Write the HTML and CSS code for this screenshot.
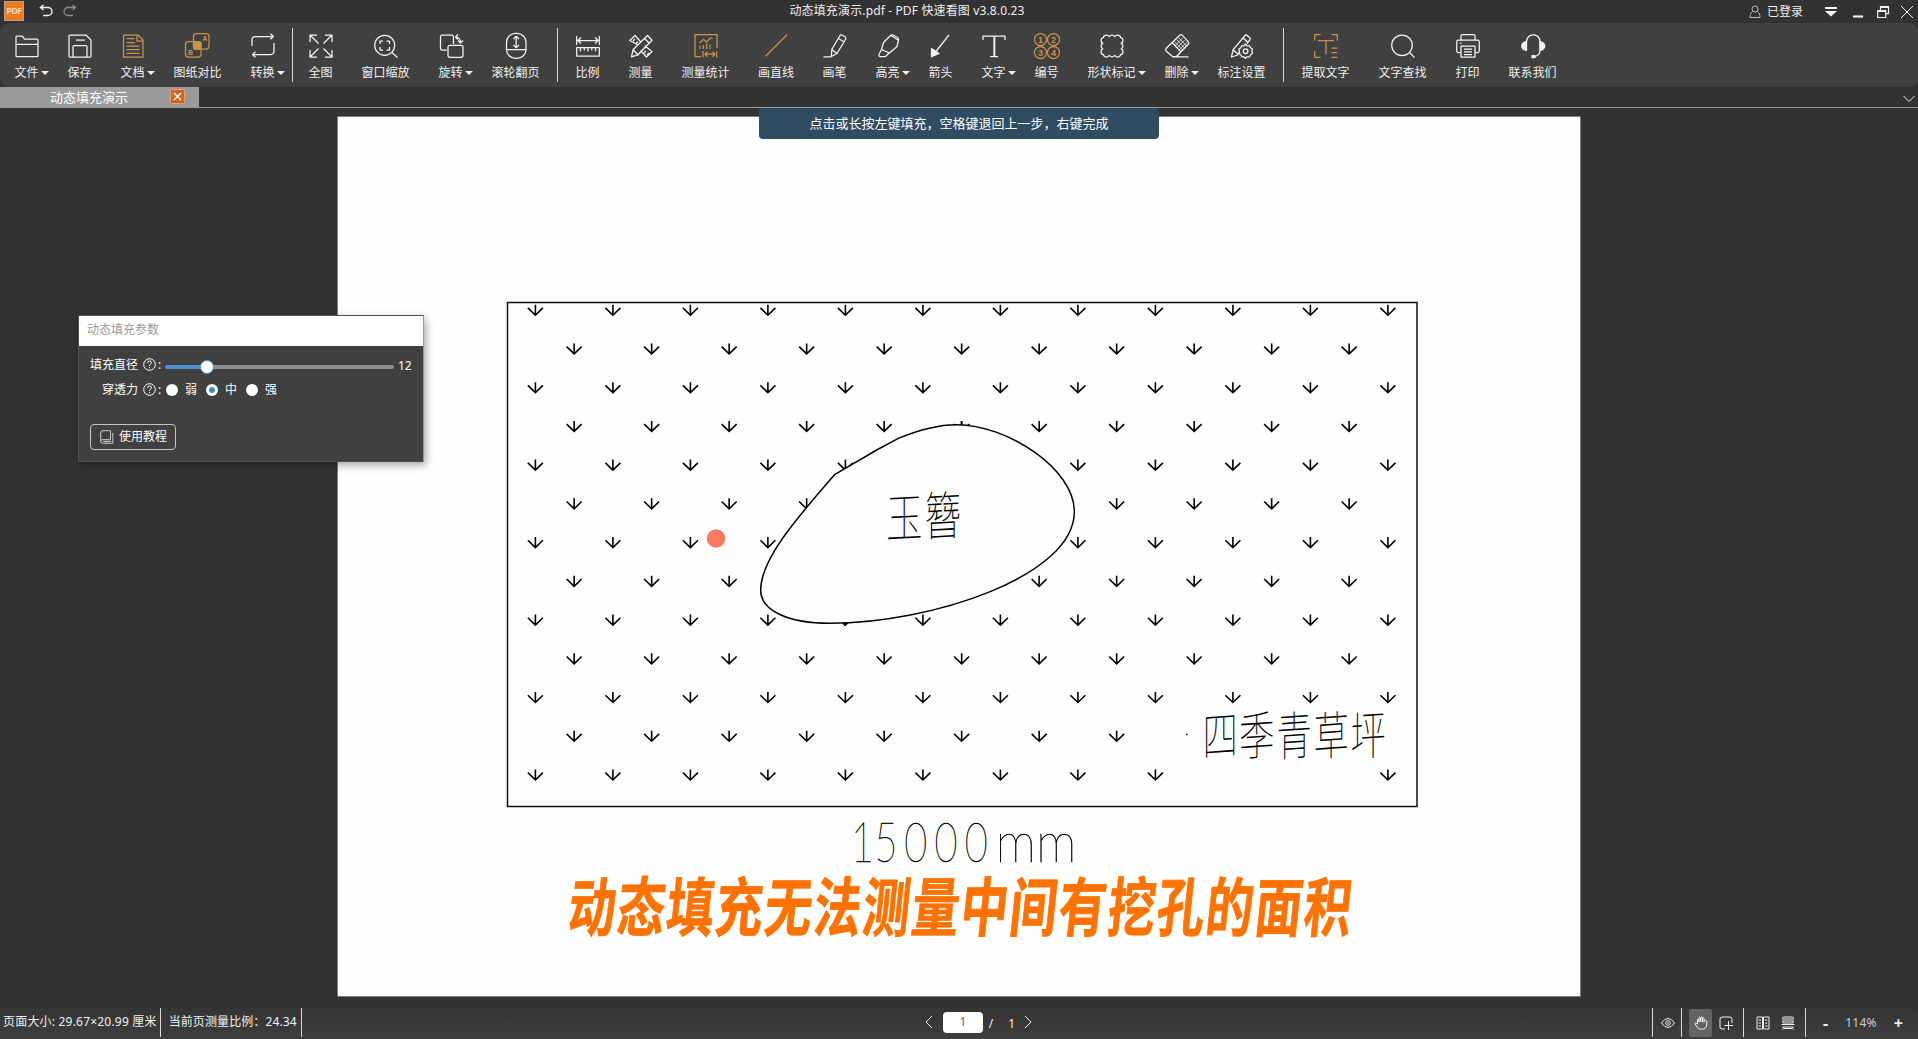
FILE: index.html
```html
<!DOCTYPE html>
<html lang="zh-CN">
  <head>
    <meta charset="UTF-8" />
    <meta name="viewport" content="width=device-width, initial-scale=1.0" />
    <title>动态填充演示.pdf - PDF 快速看图 v3.8.0.23</title>
    <link rel="stylesheet" href="styles.css">
  </head>
  <body>
    <header class="titlebar">
      <div class="title-left">
        <div class="logo">PDF</div>
        <svg class="undo" viewBox="0 0 14 14"><path d="M4.500 1 1.500 3.500l3 2.500M1.500 3.500H9a4 4 0 0 1 0 8H4"/></svg>
        <svg class="redo" viewBox="0 0 14 14"><path d="M9.500 1l3 2.500-3 2.500M12.500 3.500H5a4 4 0 0 0 0 8h5"/></svg>
      </div>
      <div class="title-text">动态填充演示.pdf - PDF 快速看图 v3.8.0.23</div>
      <div class="title-right">
        <svg class="user" viewBox="0 0 12 14"><circle cx="6" cy="4" r="3"/><path d="M3.500 6.500C1.500 8 1 10 1 12.500h10c0-2.500-.5-4.500-2.500-6"/></svg>
        <span class="login">已登录</span>
        <svg class="win-menu" viewBox="0 0 12 12"><path d="M0 1h12v2H0zM0 5h12l-6 5.500z"/></svg>
        <svg class="win-min" viewBox="0 0 10 12"><path d="M0 9.500h10v2H0z"/></svg>
        <svg class="win-restore" viewBox="0 0 12 12"><path d="M3.500 4V.7h8v7H9M.7 4.500h8v7h-8zM3.500 1.500h8M.7 5.300h8"/></svg>
        <svg class="win-close" viewBox="0 0 14 14"><path d="M1 1l12 12M13 1 1 13"/></svg>
      </div>
    </header>

    <nav class="toolbar">
      <div class="tool"><svg viewBox="0 0 24 24"><path d="M1 22V3q0-1 1-1h5l2.500 3H22q1 0 1 1v16q0 .6-.6.6H1.600Q1 22.600 1 22zM1 10.300h22"/></svg><span class="label drop">文件</span></div>
      <div class="tool"><svg viewBox="0 0 24 24"><path d="M2 1h16l5 5v16q0 1-1 1H2q-1 0-1-1V2q0-1 1-1zM5 23V12.500q0-1 1-1h12q1 0 1 1V23M8 6h9"/></svg><span class="label">保存</span></div>
      <div class="tool gold"><svg viewBox="0 0 24 24"><path d="M2.500 1H17l5 5v17H2.500zM16 1v6h6M5.500 4.500h8M5.500 8.500h8M5.500 12h13M5.500 15.700h13M5.500 19.300h13"/></svg><span class="label drop">文档</span></div>
      <div class="tool wide gold"><svg viewBox="0 0 24 24"><rect x="7.500" y="-.5" width="15.500" height="15.500" rx="3"/><rect x="-.5" y="7.500" width="15.500" height="15.500" rx="3"/><rect class="solid" x="7.500" y="7.500" width="7.500" height="7.500" rx="1.500"/><text x="16.300" y="7">A</text><text x="2" y="20.700">B</text></svg><span class="label">图纸对比</span></div>
      <div class="tool"><svg viewBox="0 0 24 24"><path d="M1 12V6q0-3.500 3.500-3.500H22M19.500-.2l3 2.700-3 2.700M23 9v8q0 3.500-3.500 3.500H2M4.500 17.800l-3 2.700 3 2.700"/></svg><span class="label drop">转换</span></div>
      <div class="divider first"></div>
      <div class="tool"><svg viewBox="0 0 24 24"><path d="M1 8V1h7M1 1l8.500 8.500M16 1h7v7M23 1l-8.500 8.500M1 16v7h7M1 23l8.500-8.500M16 23h7v-7M23 23l-8.500-8.500"/></svg><span class="label">全图</span></div>
      <div class="tool wide"><svg viewBox="0 0 24 24"><circle cx="10.700" cy="11.300" r="10"/><path d="M18 18.500l5.500 5M6 10V7h3M12.500 7h3v3M15.500 13v3h-3M9 16H6v-3"/></svg><span class="label">窗口缩放</span></div>
      <div class="tool"><svg viewBox="0 0 24 24"><path d="M8 16H3.500Q1.500 16 1.500 14V3q0-2 2-2h9q2 0 2 2v7"/><rect x="9" y="11.300" width="15" height="12" rx="2"/><path d="M17 3q4 .5 4.500 5M19 .5 16.500 3l2.500 2.500M19 6.500l2.500 2.500L24 6.500"/></svg><span class="label drop">旋转</span></div>
      <div class="tool wide"><svg viewBox="0 0 24 24"><rect x="2.500" y="-.6" width="19.500" height="25" rx="9"/><path d="M2.500 15.700H22M12.200 2.500v11M9.500 5l2.700-2.700L15 5M9.500 11l2.700 2.700L15 11"/></svg><span class="label">滚轮翻页</span></div>
      <div class="divider"></div>
      <div class="tool"><svg viewBox="0 0 24 24"><path d="M.7 2v9M23.300 2v9M2 6.500h20M5 3.500l-3 3 3 3M19 3.500l3 3-3 3M.7 13.500h22.600V22H.7zM4.500 13.500v4M8.300 13.500v3M12 13.500v4M15.800 13.500v3M19.500 13.500v4"/></svg><span class="label">比例</span></div>
      <div class="tool"><svg viewBox="0 0 24 24"><path d="M9 11 .8 6.500 6 1.500l5.500 6M15.500 11.500l7.500 6-5.500 5.500-6-6.500M4 7l2-2M7 9.500l2-2M15 19l2-2M18 21l2-2M2.500 22.800l1.500-7L18.500 1.500l4.500 4.800L9 20.800zM4 15.800l5 5M15.500 4.500l4.800 4.800"/></svg><span class="label">测量</span></div>
      <div class="tool wide gold"><svg viewBox="0 0 24 24"><path d="M7 22.700H1V.7h22V14M5.500 9l4-3.500 3 2.500 4-4h2M6 15v-3M9.300 15v-4M12.600 15V9.500M16 15v-4.500M9 17v6.500M22.700 17v6.500M11 20.200h10M13.500 17.700 11 20.200l2.500 2.500M18.500 17.700l2.500 2.500-2.500 2.500"/></svg><span class="label">测量统计</span></div>
      <div class="tool three gold"><svg viewBox="0 0 24 24"><path d="M1.500 22.300 23 .8"/></svg><span class="label">画直线</span></div>
      <div class="tool"><svg viewBox="0 0 24 24"><path d="M.5 22.800h7.700M8.300 22.500l.5-7L17 1.500q1-1 2.500-.3l2.500 1.500q1.200 1 .6 2.500L14 19.500zM8.800 15.500l5.200 4M15.500 4.500l5.700 3.500"/></svg><span class="label">画笔</span></div>
      <div class="tool"><svg viewBox="0 0 24 24"><path d="M5.500 15.500 7.500 8.500 14.500 1.500q1-1 2.500-.5l4.500 2.500q1.300.8 1 2.500l-1.500 6.500-7.500 6.500zM15 1.500l7 4.500M5.500 15.500 3 20.500q-.5 2 1.500 2h5l3.500-3.500"/></svg><span class="label drop">高亮</span></div>
      <div class="tool"><svg viewBox="0 0 24 24"><path d="M20 1 5 20"/><path class="solid" d="M2.500 14.500v8.300l7.500-3.300z"/></svg><span class="label">箭头</span></div>
      <div class="tool"><svg viewBox="0 0 24 24"><path d="M1 6V2.200h22V6M12 2.200V22.500M8 22.500h8"/><path d="M12.700 3v19"/></svg><span class="label drop">文字</span></div>
      <div class="tool gold"><svg viewBox="0 0 24 24"><circle cx="5.500" cy="5.500" r="6"/><circle cx="18.500" cy="5.500" r="6"/><circle cx="5.500" cy="18.500" r="6"/><circle cx="18.500" cy="18.500" r="6"/><text class="num" x="3" y="8.700">1</text><text class="num" x="16" y="8.700">2</text><text class="num" x="3" y="21.700">3</text><text class="num" x="16" y="21.700">4</text></svg><span class="label">编号</span></div>
      <div class="tool wide"><svg viewBox="0 0 24 24"><path d="M3.500 3.500q0-2.500 3-2.500 2 0 2.700 1.700Q12-.5 14.800 2.700 15.500 1 17.500 1q3 0 3 2.500 2.500 0 2.500 3 0 2-1.700 2.700 3.200 2.800 0 5.600Q23 15.500 23 17.500q0 3-2.500 3 0 2.500-3 2.500-2 0-2.700-1.700-2.800 3.200-5.600 0Q8.500 23 6.500 23q-3 0-3-2.500-2.500 0-2.500-3 0-2 1.700-2.700-3.200-2.800 0-5.600Q1 8.500 1 6.500q0-3 2.500-3z"/></svg><span class="label drop">形状标记</span></div>
      <div class="tool"><svg viewBox="0 0 24 24"><path d="M7.500 22.500 1 17q-1-1.500.3-2.800L15 1q1.500-.8 2.500.3l6 6.500q.8 1.500-.3 2.500L11.500 22.500zM7.500 9l8.500 9M7.500 22.800h16"/><path class="mesh" d="M9.500 7.500l8.500 9M11.500 5.500l8.500 9M13.500 3.500l8.500 9M10 11.500l8-8M12 13.800l8-8M14.200 16l8-8"/></svg><span class="label drop">删除</span></div>
      <div class="tool wide"><svg viewBox="0 0 24 24"><path d="M8 21l-6.500 2L3 15.800 15 1.500q1-1 2.300 0l2.500 2.200q1 1 0 2.300L17 9.500M3 15.800l5 4.500 2-2.300M13 4l4.500 4M15.500 10l1.500 1.800h2.500l1 2 2 1.200-.7 2.200.7 2.300-2 1.300-1 2H17l-1.500 1.500-1.700-1.500h-2l-1-2-2-1.300.7-2.300-.7-2.200 2-1.200 1-2h2z"/><circle cx="15.600" cy="17.200" r="2.300"/></svg><span class="label">标注设置</span></div>
      <div class="divider"></div>
      <div class="tool wide gold"><svg viewBox="0 0 24 24"><path d="M.7 6.500V.7h6M17.500.7h5.800v5.800M.7 17v6.300h6M17.500 23.300h5.800M4 6.500h16M12 6.500v14M17.500 14h5.800M17.500 18.700h5.800"/></svg><span class="label">提取文字</span></div>
      <div class="tool wide"><svg viewBox="0 0 24 24"><circle cx="11" cy="11.300" r="10.300"/><path d="M18.500 18.500l5 5"/></svg><span class="label">文字查找</span></div>
      <div class="tool"><svg viewBox="0 0 24 24"><path d="M5 6V2q0-1.500 1.500-1.500h11Q19 .5 19 2v4M5 18.500H2.500Q.7 18.500.7 16.700V8q0-2 2-2h18.600q2 0 2 2v8.700q0 1.800-1.800 1.800H19M5 12h14v11H5zM4 9h1.500M8 15h8M8 17.800h8M8 20.500h8"/></svg><span class="label">打印</span></div>
      <div class="tool wide"><svg viewBox="0 0 24 24"><path d="M5.500 8Q6 .9 12.300.9T19 8v8q0 6.300-6.500 6.500"/><path class="solid" d="M5.500 7.500v9Q.8 15.500.8 12t4.700-4.500zM19 7.500v9q4.700-1 4.700-4.500T19 7.500zM11 21.500h3v2h-3z"/></svg><span class="label">联系我们</span></div>
    </nav>

    <div class="tabs">
      <div class="tab">
        <span>动态填充演示</span>
        <svg viewBox="0 0 15 15"><rect x=".5" y=".5" width="14" height="14" rx="1"/><path d="M4 4l7 7M11 4l-7 7"/></svg>
      </div>
      <svg class="tab-more" viewBox="0 0 12 8"><path d="M.5 1l5.500 5.500L11.500 1"/></svg>
    </div>

    <main class="workspace">
      <svg class="page" viewBox="338 117 1242 879">
        <rect class="frame" x="507.500" y="302.500" width="909.500" height="504"/>
        <g class="grass"></g>
        <path class="bed" transform="translate(740 400) scale(.33333)" d="M285 223 410 150 475 115C550 84 600 74 650 74 800 74 1003 205 1003 335 1003 530 570 670 270 670 150 670 62 635 62 570 62 480 165 360 285 223z"/>
        <path class="grass-mark" d="M961.500 421v4M954 424.700h.8M969 424.700h.8M843.500 623.500l1.500 1.500 1.500-1.500M1186 734.500h1.500"/>
        <text class="cad" transform="translate(886 538) skewY(-3) scale(.72 1.030)" font-size="51" textLength="104" lengthAdjust="spacing">玉簪</text>
        <g class="cad" font-size="52">
          <text transform="translate(1202.500 756) skewY(-4) scale(.68 1)">四</text>
          <text transform="translate(1239 756) skewY(-4) scale(.68 1)">季</text>
          <text transform="translate(1276.500 756) skewY(-4) scale(.68 1)">青</text>
          <text transform="translate(1313.500 756) skewY(-4) scale(.68 1)">草</text>
          <text transform="translate(1350.500 756) skewY(-4) scale(.68 1)">坪</text>
        </g>
        <text class="size" transform="translate(0 861.500) scale(.72 1)" x="1182 1214.500 1256 1298 1340">15000</text>
        <text class="size" transform="translate(995.500 861.500) scale(.9 1)" textLength="90" lengthAdjust="spacingAndGlyphs">mm</text>
        <text class="caption" transform="translate(566.500 931) skewX(-6) scale(.74 1)" textLength="1058" lengthAdjust="spacing">动态填充无法测量中间有挖孔的面积</text>
        <circle class="brush" cx="716" cy="538.500" r="9.200"/>
      </svg>
      <div class="hint">点击或长按左键填充，空格键退回上一步，右键完成</div>

      <section class="dialog">
        <h2>动态填充参数</h2>
        <div class="dialog-body">
          <div class="row">
            <span class="name">填充直径</span>
            <svg class="help" viewBox="0 0 13 13"><circle cx="6.500" cy="6.500" r="5.800"/><path d="M4.600 5q0-2 1.900-2t1.900 1.800q0 1-1 1.600T6.500 8M6.500 9.200v1"/></svg>
            <span class="colon">:</span>
            <div class="slider"><div class="fill"></div><div class="thumb"></div><div class="rest"></div></div>
            <span class="value">12</span>
          </div>
          <div class="row">
            <span class="name">穿透力</span>
            <svg class="help" viewBox="0 0 13 13"><circle cx="6.500" cy="6.500" r="5.800"/><path d="M4.600 5q0-2 1.900-2t1.900 1.800q0 1-1 1.600T6.500 8M6.500 9.200v1"/></svg>
            <span class="colon">:</span>
            <label class="option"><i class="radio"></i>弱</label>
            <label class="option"><i class="radio checked"></i>中</label>
            <label class="option"><i class="radio"></i>强</label>
          </div>
          <button class="tutorial"><svg viewBox="0 0 14 14"><path d="M3 .7h7.500v9H2.500q-1.800 0-1.800 1.800V3Q.7.700 3 .7zM12.800 3v10.300H2.500q-1.800 0-1.800-1.800M3 11.500h8"/></svg>使用教程</button>
        </div>
      </section>
    </main>

    <footer class="statusbar">
      <div class="status-left">
        <span class="status-text">页面大小: 29.67×20.99 厘米</span>
        <span class="status-text">当前页测量比例：24.34</span>
      </div>
      <div class="pager">
        <svg viewBox="0 0 8 14"><path d="M7 1 1 7l6 6"/></svg>
        <span class="page-input">1</span>
        <span class="slash">/</span>
        <span class="total">1</span>
        <svg viewBox="0 0 8 14"><path d="M1 1l6 6-6 6"/></svg>
      </div>
      <div class="status-right">
        <div class="group eye"><svg viewBox="0 0 14 14"><path d="M.5 7Q3.500 2.500 7 2.500T13.500 7Q10.500 11.500 7 11.500T.5 7z"/><circle cx="7" cy="7" r="2.300"/><circle cx="7" cy="7" r=".4"/></svg></div>
        <div class="group modes">
          <span class="mode active"><svg viewBox="0 0 14 14"><path d="M3.500 8V3.500q.7-1.200 1.500 0V6M5 6V1.800q.8-1.200 1.700 0V6M6.700 6V1.500q.8-1.200 1.700 0V6M8.400 6V2.300q.8-1.100 1.600 0V6.500M10 5q1.500-1.500 2.800 0v3q0 5-5 5.300Q4.500 13.500 3 11L.8 7.500Q1.500 6 3.500 8"/></svg></span>
          <span class="mode"><svg viewBox="0 0 14 14"><path d="M6 13H3Q1 13 1 11V3q0-2 2-2h8q2 0 2 2v4M9.500 5v9M5.500 9.500H14"/></svg></span>
        </div>
        <div class="group views">
          <svg viewBox="0 0 14 14"><path d="M1 1h5.500v12H1zM7.500 1H13v12H7.500zM2.500 4H5M2.500 7H5M2.500 10H5M9 4h2.500M9 7h2.500M9 10h2.500"/></svg>
          <svg viewBox="0 0 14 14"><path d="M2 .5V7h10V.5M3 1h8M3 3h8M3 5h8M.5 8.500h13M2 13.500V11h10v2.500M3 12.500h8"/></svg>
        </div>
        <div class="group zoom">
          <span class="step">-</span>
          <span class="percent">114%</span>
          <span class="step">+</span>
        </div>
      </div>
    </footer>

    <script>
      // lawn hatch: 13 staggered rows, the label area in the lower right stays clear
      const grass = document.querySelector(".grass");
      const hidden = ["11-8", "11-9", "11-10", "12-9", "12-10"];
      for (let row = 0; row < 13; row++) {
        const odd = row % 2;
        for (let col = 0; col < 12 - odd; col++) {
          if (hidden.includes(`${row}-${col}`)) continue;
          const x = 535.4 + col * 77.5 + odd * 38.75;
          const y = 315.2 + row * 38.73;
          const mark = document.createElementNS("http://www.w3.org/2000/svg", "path");
          mark.setAttribute("d", `M${x} ${y - 10.5}V${y}M${x - 7.5} ${y - 7.3}L${x} ${y}L${x + 7.5} ${y - 7.3}`);
          mark.setAttribute("class", "grass-mark");
          grass.appendChild(mark);
        }
      }
    </script>
  </body>
</html>
```
FILE: styles.css
```css
* {
  padding: 0;
  margin: 0;
  box-sizing: border-box;
}
body {
  width: 100vw;
  height: 100vh;
  display: flex;
  flex-direction: column;
  overflow: hidden;
  background: #323232;
  color: #f0f0f0;
  font-family: "Noto Sans", "Noto Sans CJK SC", sans-serif;
  font-size: 12px;
  line-height: 16px;
}
svg {
  display: block;
  flex: none;
  fill: none;
  stroke: currentColor;
  overflow: visible;
}

/* title bar */
.titlebar {
  height: 23px;
  flex: none;
  display: grid;
  grid-template-columns: 1fr auto 1fr;
  background: #323232;
}
.title-left {
  display: flex;
  align-items: center;
  padding: 0 0 1px 4px;
}
.logo {
  width: 20px;
  height: 20px;
  border: 1px solid #b9a08c;
  background: #ee7a1c;
  color: #fbd9b8;
  font-size: 9px;
  font-weight: bold;
  line-height: 18px;
  text-align: center;
  letter-spacing: -0.5px;
}
.undo {
  width: 14px;
  margin: 0 10px 0 15px;
  stroke-width: 1.5;
}
.redo {
  width: 14px;
  color: #8c8c8c;
  stroke-width: 1.3;
}
.title-text {
  padding: 3px 104px 0 0;
  letter-spacing: 0.14px;
}
.title-right {
  display: flex;
  justify-content: flex-end;
  align-items: center;
  padding-right: 4px;
}
.user {
  width: 12px;
  margin-right: 6px;
  color: #bbb;
}
.login {
  margin-right: 22px;
}
.win-menu {
  width: 12px;
  margin-right: 16px;
  fill: #fff;
  stroke: none;
}
.win-min {
  width: 10px;
  height: 12px;
  margin-right: 14px;
  fill: #fff;
  stroke: none;
}
.win-restore {
  width: 12px;
  margin-right: 11px;
  stroke-width: 1.2;
}
.win-close {
  width: 14px;
}

/* toolbar */
.toolbar {
  height: 64px;
  flex: none;
  display: flex;
  background: #404040;
  border-radius: 9px;
}
.tool {
  width: 53px;
  flex: none;
  display: flex;
  flex-direction: column;
  align-items: center;
  gap: 7px;
  padding-top: 11px;
}
.tool.wide {
  width: 77px;
}
.tool.three {
  width: 64px;
}
.tool svg {
  width: 24px;
  height: 24px;
  color: #f4f4f4;
  stroke-width: 1.25;
  stroke-linejoin: round;
}
.tool.gold svg {
  color: #c8944a;
}
.tool .solid {
  fill: currentColor;
}
.tool .mesh {
  stroke-width: 0.8;
}
.tool text {
  fill: currentColor;
  stroke: none;
  font-family: "Liberation Sans", sans-serif;
  font-size: 7px;
  font-weight: bold;
}
.tool .num {
  font-size: 9px;
}
.label {
  white-space: nowrap;
}
.drop::after {
  content: "";
  display: inline-block;
  margin: 0 -10px 2px 2px;
  border: 4px solid transparent;
  border-top-color: #f0f0f0;
  border-bottom: 0;
}
.divider {
  width: 7px;
  flex: none;
  height: 54px;
  margin-top: 5px;
  background: linear-gradient(#d8d8d8, #d8d8d8) 3px 0 / 1px 100% no-repeat;
}
.divider.first {
  width: 5px;
}

/* document tabs */
.tabs {
  height: 21px;
  flex: none;
  display: flex;
  justify-content: space-between;
  align-items: center;
  padding-right: 3px;
  border-bottom: 1px solid #9a9a9a;
}
.tab {
  width: 199px;
  height: 20px;
  display: flex;
  align-items: center;
  justify-content: space-between;
  padding: 0 14px 0 50px;
  background: #9a9a9a;
  color: #fff;
  font-size: 13px;
}
.tab svg {
  width: 15px;
  margin-bottom: 1px;
  stroke-width: 1.4;
}
.tab rect {
  fill: #cc692a;
  stroke: #f0a070;
  stroke-width: 1;
}
.tab-more {
  width: 12px;
  margin-top: 4px;
}

/* drawing area */
.workspace {
  position: relative;
  flex: 1;
  min-height: 0;
  padding: 9px 0 0 338px;
}
.page {
  width: 1242px;
  height: 879px;
  background: #fefefe;
  box-shadow: 0 0 0 0.5px #ccc;
}
.frame {
  stroke: #111;
  stroke-width: 1.5;
}
.grass-mark {
  stroke: #000;
  stroke-width: 1.6;
}
.bed {
  fill: #fefefe;
  stroke: #000;
  stroke-width: 4.4;
}
.cad {
  fill: #000;
  stroke: none;
  font-family: "Noto Sans CJK SC", sans-serif;
  font-weight: 100;
}
.size {
  fill: #000;
  stroke: #000;
  stroke-width: 0.5;
  font-family: Lato, sans-serif;
  font-weight: 100;
  font-size: 55px;
}
.caption {
  fill: #ff7200;
  stroke: #ff7200;
  stroke-width: 0.8;
  font-family: "Noto Sans CJK SC", sans-serif;
  font-size: 64px;
  font-weight: 700;
}
.brush {
  fill: #fa7860;
  stroke: none;
}
.hint {
  position: absolute;
  left: 759px;
  top: 0;
  width: 400px;
  height: 31px;
  border-radius: 4px;
  background: #304c63;
  color: #fff;
  font-family: "Noto Sans CJK SC", sans-serif;
  font-size: 13px;
  line-height: 29px;
  text-align: center;
}

/* fill settings window */
.dialog {
  position: absolute;
  left: 78px;
  top: 207px;
  width: 346px;
  height: 147px;
  border: 1px solid #505050;
  border-right-color: #999;
  background: #404040;
  color: #fff;
  box-shadow: 2px 3px 8px rgba(0, 0, 0, 0.35);
}
.dialog h2 {
  height: 30px;
  padding: 6px 8px 0;
  background: #fff;
  color: #999;
  font-size: 12px;
  font-weight: normal;
}
.dialog-body {
  padding: 11px 11px 0;
}
.row {
  display: flex;
  align-items: center;
  height: 16px;
  margin-bottom: 9px;
}
.name {
  width: 48px;
  text-align: right;
}
.help {
  width: 13px;
  margin: 0 2px 1px 5px;
}
.colon {
  width: 8px;
}
.slider {
  width: 229px;
  display: flex;
  align-items: center;
  margin: 3px 4px 0 -1px;
}
.fill {
  width: 36px;
  height: 4px;
  border-radius: 2px 0 0 2px;
  background: #4a90d0;
}
.thumb {
  width: 14px;
  height: 14px;
  margin: 0 -1px;
  border: 1.5px solid #4a90d0;
  border-radius: 50%;
  background: #fff;
}
.rest {
  flex: 1;
  height: 4px;
  border-radius: 0 2px 2px 0;
  background: #8c8c8c;
}
.value {
  margin-top: 2px;
}
.option {
  width: 40px;
  display: flex;
  align-items: center;
  gap: 7px;
}
.radio {
  width: 12px;
  height: 12px;
  border-radius: 50%;
  background: #fff;
}
.radio.checked {
  background: radial-gradient(#4088c8 2.5px, #fff 3.5px);
}
.tutorial {
  width: 86px;
  height: 26px;
  margin-top: 26px;
  display: flex;
  align-items: center;
  padding-left: 9px;
  gap: 5px;
  border: 1px solid #c4c4c4;
  border-radius: 4px;
  background: none;
  color: #fff;
  font: inherit;
}
.tutorial svg {
  width: 14px;
  color: #ccc;
}

/* status bar */
.statusbar {
  height: 31px;
  flex: none;
  display: grid;
  grid-template-columns: 1fr auto 1fr;
  background: linear-gradient(#343434, #3e3e3e);
}
.status-left {
  display: flex;
  height: 29px;
}
.status-text {
  padding: 6px 4px 0 8px;
  border-right: 1px solid #d8d8d8;
  letter-spacing: 0.1px;
  white-space: nowrap;
}
.status-text:first-child {
  padding: 6px 3px 0;
  letter-spacing: 0.2px;
}
.pager {
  display: flex;
  align-items: center;
  padding: 0 0 3px 39px;
}
.pager svg {
  width: 8px;
}
.page-input {
  width: 40px;
  height: 21px;
  margin: 1px 6px 0 10px;
  border-radius: 4px;
  background: #fff;
  color: #666;
  line-height: 20px;
  text-align: center;
}
.slash {
  margin: 3px 15px 0 0;
}
.total {
  margin: 3px 9px 0 0;
}
.status-right {
  display: flex;
  justify-content: flex-end;
  height: 29px;
}
.group {
  display: flex;
  align-items: center;
  border-left: 1px solid #d8d8d8;
}
.group svg {
  width: 14px;
}
.eye {
  width: 29px;
  padding-left: 8px;
}
.modes {
  width: 62px;
  padding-left: 7px;
}
.mode {
  width: 23px;
  height: 28px;
  display: grid;
  place-items: center;
  margin-right: 2px;
}
.mode.active {
  background: #636363;
  border-radius: 2px;
}
.views {
  width: 62px;
  padding-left: 12px;
  gap: 11px;
}
.zoom {
  width: 113px;
  padding: 1px 15px 0 17px;
  justify-content: space-between;
}
.percent {
  color: #ccc;
  letter-spacing: 0.2px;
}
.step {
  font-size: 16px;
  font-weight: bold;
}
```
